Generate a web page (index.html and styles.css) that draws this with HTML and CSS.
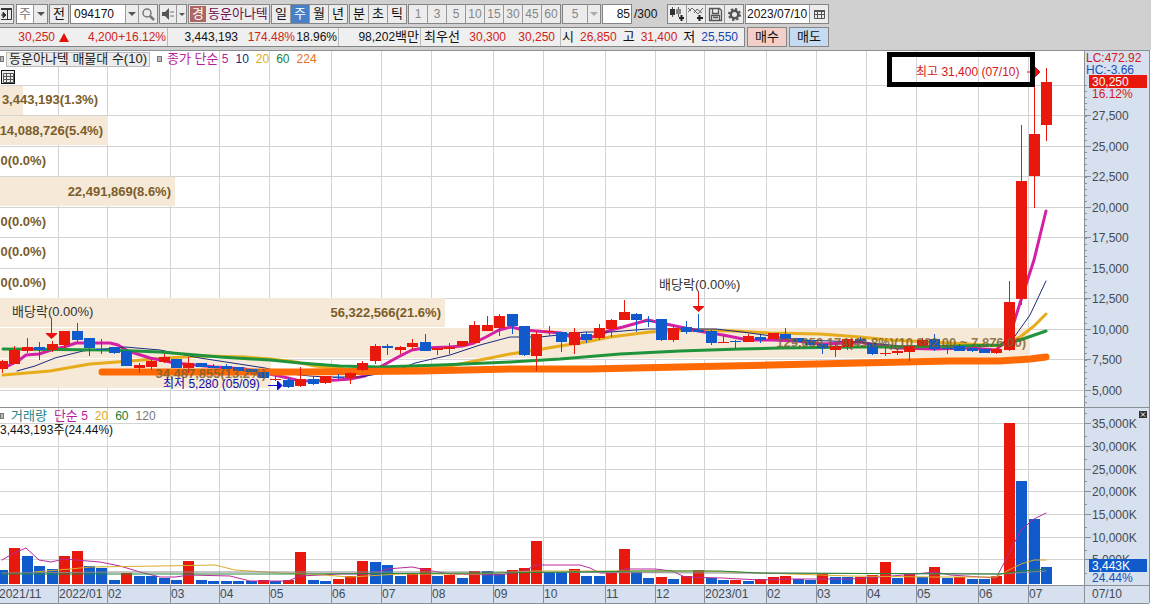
FILE: index.html
```html
<!DOCTYPE html>
<html lang="ko">
<head>
<meta charset="utf-8">
<title>동운아나텍 주봉 차트</title>
<link rel="stylesheet" href="styles.css">
</head>
<body>
<header class="toolbar">
  <div class="group edge"><button class="cell layout" aria-label="레이아웃"><svg width="12" height="14" viewBox="0 0 12 14"><path d="M0 2.500H10.500V12.500H0M6.500 3V12" fill="none" stroke="#333"/><path d="M0 2H11" stroke="#333" stroke-width="2"/><path d="M0 8H4M2 5L5 8L2 11Z" fill="#333" stroke="#333"/></svg></button></div>
  <div class="group"><button class="cell period muted">주</button><button class="cell drop" aria-label="주기 선택"><i class="caret"></i></button></div>
  <div class="group"><button class="cell">전</button></div>
  <div class="group"><input class="field code" value="094170" aria-label="종목 코드"><button class="cell drop" aria-label="종목 목록"><i class="caret"></i></button><button class="cell" aria-label="검색"><svg width="15" height="15" viewBox="0 0 15 15" fill="none" stroke="#777"><circle cx="6" cy="6" r="4" stroke-width="1.500"/><path d="M9 9L13 13" stroke-width="2.500"/></svg></button></div>
  <div class="group"><button class="cell sound" aria-label="소리"><svg width="14" height="14" viewBox="0 0 14 14"><path d="M1 5H4L8 1V13L4 9H1Z" fill="#555"/><path d="M10 4V10M12 4V10" stroke="#777" stroke-dasharray="2 2"/></svg></button><button class="cell mini" aria-label="소리 설정"><i class="caret small"></i></button></div>
  <div class="group stock"><span class="badge">경</span><span class="stock-name">동운아나텍</span></div>
  <div class="group"><button class="cell">일</button><button class="cell on">주</button><button class="cell">월</button><button class="cell">년</button></div>
  <div class="group"><button class="cell">분</button><button class="cell">초</button><button class="cell">틱</button></div>
  <div class="group off"><button class="cell">1</button><button class="cell">3</button><button class="cell">5</button><button class="cell">10</button><button class="cell">15</button><button class="cell">30</button><button class="cell">45</button><button class="cell">60</button></div>
  <div class="group off"><button class="cell wide">5</button><button class="cell drop" aria-label="분 선택"><i class="caret pale"></i></button></div>
  <label class="count"><input class="field bars" value="85" aria-label="봉 개수"><span>/300</span></label>
  <div class="group">
    <button class="cell" aria-label="봉 추가"><svg width="16" height="16" viewBox="0 0 16 16"><path d="M3.500 1V11M9.500 1V11" stroke="#555"/><path d="M1 3H6V9H1Z" fill="#333"/><path d="M7 3H12V8H7Z" fill="#888"/><path d="M12.500 9V15M10 12H15" stroke="#222" stroke-width="2"/></svg></button>
    <button class="cell" aria-label="지표 추가"><svg width="16" height="16" viewBox="0 0 16 16" fill="none"><path d="M0 6L4 2L10 8L15 2M0 2L3 5M6 7L9 3L14 7" stroke="#666"/><path d="M11.500 9V15M9 12H15" stroke="#222" stroke-width="2"/></svg></button>
    <button class="cell" aria-label="저장"><svg width="15" height="15" viewBox="0 0 15 15" fill="none" stroke="#555"><path d="M1.500 1.500H11.500L13.500 3.500V13.500H1.500ZM4.500 2V6.500H10.500V2M3.500 13V8.500H11.500V13M5 10.500H10" stroke-width="1.300"/></svg></button>
    <button class="cell" aria-label="설정"><svg width="15" height="15" viewBox="0 0 15 15" fill="none" stroke="#555"><circle cx="7.500" cy="7.500" r="5.500" stroke-width="2" stroke-dasharray="2.200 2.100"/><circle cx="7.500" cy="7.500" r="3.700" stroke-width="2.400"/></svg></button>
  </div>
  <div class="group"><input class="field date" value="2023/07/10" aria-label="날짜"><button class="cell" aria-label="달력"><svg width="13" height="12" viewBox="0 0 13 12" fill="none" stroke="#555"><path d="M1.500 2.500H11.500V10.500H1.500ZM1 6.500H12M4.500 3V10M8.500 3V10"/><path d="M1 3H12" stroke-width="2"/></svg></button></div>
</header>

<section class="quote">
  <div class="strip">
    <div class="part part-price red"><span>30,250</span><i class="up"></i><span class="n2">4,200</span><span class="n3">+16.12%</span></div>
    <div class="part part-vol"><span>3,443,193</span><span class="n5 red">174.48%</span><span class="n7">18.96%</span></div>
    <div class="part part-amount"><span>98,202<b>백만</b></span></div>
    <div class="part part-best"><b>최우선</b><span class="n6 red">30,300</span><span class="n2 red">30,250</span></div>
    <div class="part part-range"><b>시</b><span class="red">26,850</span><b>고</b><span class="red">31,400</span><b>저</b><span class="blue">25,550</span></div>
  </div>
  <button class="trade buy">매수</button>
  <button class="trade sell">매도</button>
</section>

<main class="chart">
  <svg class="plot" viewBox="0 50 1151 554" role="img" aria-label="동운아나텍 주봉 차트와 거래량">
    <rect x="0" y="50" width="1151" height="554" fill="#fff"/>
    <g fill="#d6e0ee"><rect x="1085" y="51" width="64" height="553"/><rect x="0" y="586" width="1149" height="17"/></g>
    <g id="grid"></g>
    <g fill="#f6e9d7">
      <rect x="0" y="86" width="23" height="29"/><rect x="0" y="116" width="108" height="29"/><rect x="0" y="177" width="175" height="29"/>
      <rect x="0" y="298" width="445" height="29"/><rect x="0" y="328" width="1030" height="30"/><rect x="0" y="359" width="271" height="29"/>
    </g>
    <path d="M0 327.500H445M0 358.500H1030" stroke="#fff"/>
    <g id="averages"></g>
    <g id="candles"></g>
    <g id="volumes"></g>
    <g id="volume-averages"></g>
    <g id="axis"></g>
    <g class="profile">
      <text class="end" x="98" y="104">3,443,193(1.3%)</text>
      <text class="end" x="103" y="135">14,088,726(5.4%)</text>
      <text class="end" x="46" y="165">0(0.0%)</text>
      <text class="end" x="171" y="196">22,491,869(8.6%)</text>
      <text class="end" x="46" y="226">0(0.0%)</text>
      <text class="end" x="46" y="256">0(0.0%)</text>
      <text class="end" x="46" y="287">0(0.0%)</text>
      <text class="end" x="441" y="317">56,322,566(21.6%)</text>
      <g opacity="0.8"><text class="end" x="266" y="378">34,487,855(13.2%)</text>
      <text class="end" x="1026" y="347">129,659,174(49.8%)(10,362.00 ~ 7,876.00)</text></g>
    </g>
    <text x="12" y="316" class="note">배당락(0.00%)</text>
    <text x="659" y="289" class="note">배당락(0.00%)</text>
    <g stroke="#e81010" fill="#e81010"><path d="M51.500 319V334M46 333.500H57L51.500 338.500Z"/><path d="M698.500 292V307M693 306.500H704L698.500 311.500Z"/><path d="M1027 72H1034" fill="none"/><path d="M1035 67L1040 72L1035 77Z"/></g>
    <text x="163" y="388" class="low">최저 5,280 (05/09)</text>
    <path d="M268 385.500H277M277.500 381V390L282 385.500Z" stroke="#0b0bd0" fill="#0b0bd0"/>
    <rect x="889.500" y="54.500" width="143" height="30" fill="none" stroke="#000" stroke-width="5"/>
    <text x="916" y="76" class="high">최고 31,400 (07/10)</text>
    <g class="scale">
      <text class="high" x="1086" y="62">LC:472.92</text>
      <text class="fall" x="1086" y="74">HC:-3.66</text>
      <rect x="1089" y="75" width="58" height="13" fill="#e8180c"/><text class="inverse" x="1092" y="86">30,250</text>
      <text class="high" x="1092" y="98">16.12%</text>
      <rect x="1089" y="559" width="58" height="13" fill="#105acb"/><text class="inverse" x="1092" y="570">3,443K</text>
      <text class="fall" x="1092" y="582">24.44%</text>
      <text x="1092" y="598">07/10</text>
    </g>
    <g><rect x="1139" y="411" width="8" height="7" fill="#333"/><path d="M1141 412.500L1145 416.500M1145 412.500L1141 416.500" stroke="#fff"/></g>
  </svg>
  <div class="legend price-legend"><i class="mark"></i><button class="title">동운아나텍 매물대 수(10)</button><i class="mark second"></i><span class="m5"><b>종가 단순</b> 5</span><span class="m10">10</span><span class="m20">20</span><span class="m60">60</span><span class="m224">224</span></div>
  <button class="grid-button" aria-label="표 보기"><svg width="11" height="11" viewBox="0 0 11 11" fill="none" stroke="#555"><path d="M.500 1.500H10.500V10.500H.500ZM0 4.500H11M0 7.500H11M3.500 1V11M7.500 1V11"/></svg></button>
  <div class="legend volume-legend"><i class="mark"></i><span class="vol"><b>거래량</b></span><span class="m5"><b>단순</b> 5</span><span class="m20">20</span><span class="m60">60</span><span class="m120">120</span></div>
  <div class="volume-now">3,443,193주(24.44%)</div>
</main>
<script src="chart.js"></script>
</body>
</html>
```
FILE: styles.css
```css
* { box-sizing: border-box; }
body { margin: 0; background: #d0d0d0; color: #111; font: 12px/18px "Liberation Sans", "Noto Sans CJK KR", sans-serif; }
button, input { font: inherit; color: inherit; margin: 0; padding: 0; border: 0; border-radius: 0; }
button { display: flex; align-items: center; justify-content: center; background: none; }
b { font-weight: 400; font-size: 13px; }
.red { color: #cf2418; }
.blue { color: #1746b0; }

.toolbar { display: flex; align-items: center; height: 27px; gap: 1px; padding-top: 1px; white-space: nowrap; }
.group { display: flex; height: 20px; border: 1px solid #858585; background: #ececec; }
.group.edge { border-left: 0; margin-right: 1px; }
.cell { width: 19px; height: 18px; font-size: 13px; }
.cell:first-child { width: 18px; }
.cell + .cell, .field + .cell { border-left: 1px solid #999; }
.cell.layout { width: 13px; }
.cell.period { width: 16px; background: #fff; }
.cell.sound { width: 16px; }
.cell.drop { width: 14px; }
.field + .cell.drop, .wide + .cell.drop { width: 13px; }
.cell.mini { width: 10px; }
.cell.wide { width: 24px; }
.cell.on { background: #4880c8; color: #fff; }
.muted { color: #777; }
.caret { border: 4px solid transparent; border-top-color: #555; border-bottom: 0; }
.caret.small { border-width: 3px; border-bottom: 0; }
.caret.pale { border-top-color: #aaa; }
.off { color: #858585; }
.off .cell { font-size: 12px; }
.field { height: 18px; background: #fff; }
.code { width: 54px; padding-left: 3px; }
.stock { width: 82px; align-items: center; padding-left: 1px; color: #701050; font-size: 13px; }
.badge { width: 16px; height: 16px; line-height: 16px; text-align: center; background: #ad6661; color: #fff; }
.stock-name { padding-left: 2px; }
.count { display: flex; align-items: center; width: 64px; gap: 2px; }
.bars { width: 30px; height: 20px; border: 1px solid #858585; text-align: right; padding-right: 1px; }
.date { width: 63px; padding-left: 1px; }

.quote { display: flex; gap: 2px; height: 23px; white-space: nowrap; }
.strip { display: flex; width: 745px; height: 20px; border: 1px solid #858585; border-left: 0; background: #efefef; }
.part { display: flex; align-items: center; justify-content: flex-end; padding-right: 1px; border-right: 1px solid #bbb; }
.part:last-child { border: 0; }
.part span { text-align: right; }
.part-price { width: 168px; }
.part-vol { width: 171px; }
.part-amount { width: 82px; }
.part-best { width: 140px; padding-right: 5px; }
.part-range { flex: 1; padding-right: 6px; gap: 6px; }
.up { border: 5px solid transparent; border-bottom: 9px solid #e01408; border-top: 0; margin-left: 4px; }
.n2 { width: 49px; }
.n3 { width: 48px; }
.n5 { width: 57px; }
.n6 { width: 46px; }
.n7 { width: 42px; }
.trade { width: 40px; height: 20px; border: 1px solid #858585; font-size: 13px; }
.buy { background: #f3cfca; }
.sell { background: #c5dbf2; }

.chart { position: relative; }
.plot { display: block; width: 100%; height: auto; }
.plot text { font-size: 12px; fill: #333; }
.plot .end { text-anchor: end; }
.plot .profile text { font-size: 13px; font-weight: 700; fill: #7b5d2b; }
.plot .note { font-size: 13px; }
.plot .scale text, .plot .tick { fill: #444b55; }
.plot text.high, .plot .scale .high { fill: #d31820; }
.plot .scale .fall { fill: #1a50b8; }
.plot .scale .inverse { fill: #fff; }
.plot text.low { fill: #0b0bb0; }
.legend { position: absolute; left: 0; display: flex; align-items: center; height: 16px; white-space: nowrap; gap: 7px; }
.price-legend { top: 1px; }
.volume-legend { top: 358px; }
.mark { width: 4px; height: 6px; border: 1px solid #777; background: #bbb; }
.price-legend .mark { margin-right: -5px; }
.price-legend .second { width: 5px; margin-right: -2px; }
.title { height: 15px; padding: 0 2px; border: 1px solid #bbb; background: #ececec; color: #222; font-size: 13px; }
.m5 { color: #b91c9c; }
.m10 { color: #162a80; }
.m20 { color: #d9ab20; }
.m60 { color: #168038; }
.m224 { color: #e87020; }
.m120 { color: #777; }
.vol { color: #248488; }
.grid-button { position: absolute; left: 1px; top: 20px; width: 14px; height: 14px; border: 1px solid #111; background: #eee; }
.volume-now { position: absolute; left: 0; top: 371px; }
```
FILE: chart.js
```js
const RED = "#e8180c", BLUE = "#105acb";
const byId = id => document.getElementById(id);
const centre = i => Math.round(2 + i * 12.43) + 0.5;

// Horizontal and vertical grid
const months = [[58, "2022/01"], [107, "02"], [170, "03"], [219, "04"], [269, "05"], [331, "06"], [381, "07"], [431, "08"], [493, "09"], [543, "10"], [605, "11"], [655, "12"], [704, "2023/01"], [766, "02"], [816, "03"], [866, "04"], [916, "05"], [978, "06"], [1028, "07"]];
const prices = [[116, "27,500"], [147, "25,000"], [177, "22,500"], [208, "20,000"], [238, "17,500"], [269, "15,000"], [299, "12,500"], [330, "10,000"], [360, "7,500"], [391, "5,000"]];
const amounts = [[424, "35,000K"], [447, "30,000K"], [470, "25,000K"], [492, "20,000K"], [515, "15,000K"], [538, "10,000K"], [560, "5,000K"]];
let grid = "M0 85.5H1084";
prices.concat(amounts).forEach(([y]) => { grid += `M0 ${y - 0.5}H1084`; });
months.forEach(([x]) => { grid += `M${x + 0.5} 51V585`; });
byId("grid").innerHTML = `<path d="${grid}" stroke="#d3d3d3"/>`;

// Axis frame, ticks and labels
let frame = "M0 50.5H1150M0 407.5H1149M0 585.5H1149M0 603.5H1149M1084.5 50V603M1149.5 50V603";
months.forEach(([x]) => { frame += `M${x + 0.5} 585V603`; });
prices.concat(amounts).forEach(([y]) => { frame += `M1085 ${y - 0.5}H1091`; });
for (let k = 0; k <= 52; k++) frame += `M1085 ${Math.round(85 + k * 6.1) + 0.5}H1087`;
for (let k = 0; k <= 7; k++) frame += `M1085 ${Math.round(413 + k * 22.8) + 0.5}H1087`;
let axis = `<path d="${frame}" stroke="#8b8f96"/><text class="tick" x="-1" y="598">2021/11</text>`;
months.forEach(([x, t]) => { axis += `<text class="tick" x="${x + 1}" y="598">${t}</text>`; });
prices.forEach(([y, t]) => { axis += `<text class="tick" x="1092" y="${y + 4}">${t}</text>`; });
amounts.forEach(([y, t]) => { axis += `<text class="tick" x="1092" y="${y + 4}">${t}</text>`; });
byId("axis").innerHTML = axis;

// Weekly candles: colour, body top, body bottom, high, low
const candles = `r361,369,360,373 r350,364,346,364 r347,351,338,353 b347,350,342,360 r344,350,341,352 r331,345,331,348 b331,340,323,342 b338,348,338,356 b349,350,339,354 b347,353,347,354
b351,366,351,366 r365,368,363,373 r361,367,359,370 r357,362,354,363 b359,368,359,368 r363,368,357,373 b363,367,363,367 b366,368,364,368 b366,369,364,369 b367,371,367,371
b369,372,369,372 b372,378,372,378 r379,380,376,381 b380,387,378,388 r379,386,367,387 b379,384,376,385 r376,383,376,384 b377,378,374,379 r373,378,372,384 r363,370,361,371
r346,361,344,364 b346,348,344,355 r347,350,346,354 r343,347,339,350 b342,351,334,351 r348,350,347,355 r347,349,343,354 r341,346,341,346 r325,343,321,343 r325,331,316,331
r316,328,314,336 b314,326,314,334 b326,355,326,356 r334,356,331,371 r331,332,326,336 b332,342,332,352 r332,345,328,354 b334,340,332,343 r328,338,324,340 r320,329,319,337
r312,320,300,320 b314,320,313,332 b321,322,316,327 b319,340,319,341 r328,340,325,342 b327,332,321,334 b330,332,314,332 b331,343,330,345 r342,343,336,343 b341,342,340,348
r336,342,334,342 b337,340,335,343 r333,339,333,339 b334,339,328,339 b338,342,338,342 b340,345,340,345 b344,348,343,354 r346,350,343,357 r339,347,339,350 b339,341,337,341
b344,354,344,355 r353,354,344,356 r351,353,349,355 r346,352,346,361 r340,346,338,346 b339,349,334,351 b348,349,345,354 b346,351,344,351 b348,351,348,352 b349,353,349,353
r349,353,348,354 r302,350,281,351 r181,299,125,305 r134,176,85,208 r82,125,68,141`.split(/\s+/);
byId("candles").innerHTML = candles.map((c, i) => {
  const [top, bottom, high, low] = c.slice(1).split(",").map(Number);
  const x = centre(i), colour = c[0] === "r" ? RED : BLUE;
  return `<rect x="${x - 5.5}" y="${top}" width="11" height="${bottom - top}" fill="${colour}"/><path d="M${x} ${high}V${low}" stroke="${colour}"/>`;
}).join("");

// Weekly volume: colour and bar top
const volumes = `b570 r548 b556 b566 b569 r556 r551 b566 b568 b580 r573 b576 b576 b578 b580 r561 b580 b581 b581 b581 b581 r580 b581 r580 r552 b580 b581 r579 r576 r561
b562 b565 b576 r574 r568 b576 r575 b578 r571 b571 b574 r570 r568 r541 b572 b572 r569 b576 b576 r573 r549 b572 b578 r577 b579 r576 r570 b578 b580 r580
b581 r579 r577 r576 b579 b580 r574 b577 b577 r577 r575 r562 b578 r574 b577 r567 b578 r577 b579 b579 r576 r423 b481 b519 b567`.split(/\s+/);
byId("volumes").innerHTML = volumes.map((v, i) => {
  const top = Number(v.slice(1));
  return `<rect x="${centre(i) - 5.5}" y="${top}" width="11" height="${584 - top}" fill="${v[0] === "r" ? RED : BLUE}"/>`;
}).join("");

// Moving averages
const line = (points, colour, width) => `<polyline points="${points}" fill="none" stroke="${colour}" stroke-width="${width}" stroke-linejoin="round" stroke-linecap="round"/>`;
byId("averages").innerHTML =
  line("3,375 50,371 90,364 130,361 165,358 205,356 245,357 270,359 296,362 315,366 345,369 380,370 420,367 450,366 480,360 510,354 536,350 560,346 586,342 610,337 650,332 690,330 735,331 770,333 820,334 860,337 890,340 950,343 1000,346 1020,337 1034,326 1046,314", "#e6ac1c", 3) +
  line("6,367 18,361 26,355 39,354 51,350 64,347 76,343 110,343 118,345 128,351 150,358 175,363 215,367 245,369 265,373 288,378 300,381 315,381 337,380 350,379 365,376 380,367 400,356 412,350 424,348 449,347 462,346 474,343 486,337 499,330 511,327 524,330 549,332 561,333 574,338 586,339 598,335 611,330 623,327 648,320 661,323 685,328 698,331 723,335 748,340 772,340 797,341 822,344 847,343 860,342 873,345 897,348 934,349 971,348 996,350 1009,338 1021,300 1034,260 1046,211", "#d321a5", 3) +
  line("17,371 35,366 55,358 83,351 125,347 160,350 200,358 265,368 290,374 310,376 325,377 360,377 372,375 400,369 415,363 450,355 480,345 510,337 540,337 586,332 611,332 635,330 648,329 716,329 750,333 800,340 860,342 900,346 960,346 1000,345 1015,336 1030,315 1046,281", "#1b2b80", 1) +
  line("3,349 110,350 160,352 220,357 270,360 300,363 340,366 380,367 440,365 510,362 560,359 620,354 680,351 740,349 780,348 860,347 900,347 960,346 1000,345 1020,340 1046,331", "#20943c", 3) +
  line("102,372 300,372 420,371 510,369 590,369 680,367 770,365 860,363 950,361 1000,361 1030,359 1046,357", "#ff6a04", 7);
byId("volume-averages").innerHTML =
  line("2,560 14,553 26,548 39,560 51,562 64,559 100,562 120,566 140,572 160,577 175,577 190,575 230,576 250,581 288,581 300,576 340,574 372,574 387,569 412,567 432,571 450,574 500,575 524,571 536,565 580,565 590,568 600,573 612,573 625,569 655,569 672,571 685,577 722,578 760,580 790,579 850,579 880,577 915,574 935,572 950,575 996,578 1003,565 1021,530 1034,519 1046,513", "#b82a9c", 1) +
  line("34,572 70,569 90,567 160,566 215,565 235,570 280,573 310,574 350,577 400,574 480,574 535,571 620,571 700,571 760,573 850,576 930,577 996,577 1009,570 1021,564 1034,560 1046,560", "#d9ac2a", 1) +
  line("2,573 120,572 280,572 500,572 720,573 1000,574 1046,571", "#888", 1) +
  line("2,574 280,574 500,573 640,571 720,571 760,573 1000,574 1021,571 1046,569", "#24883c", 1);
```
